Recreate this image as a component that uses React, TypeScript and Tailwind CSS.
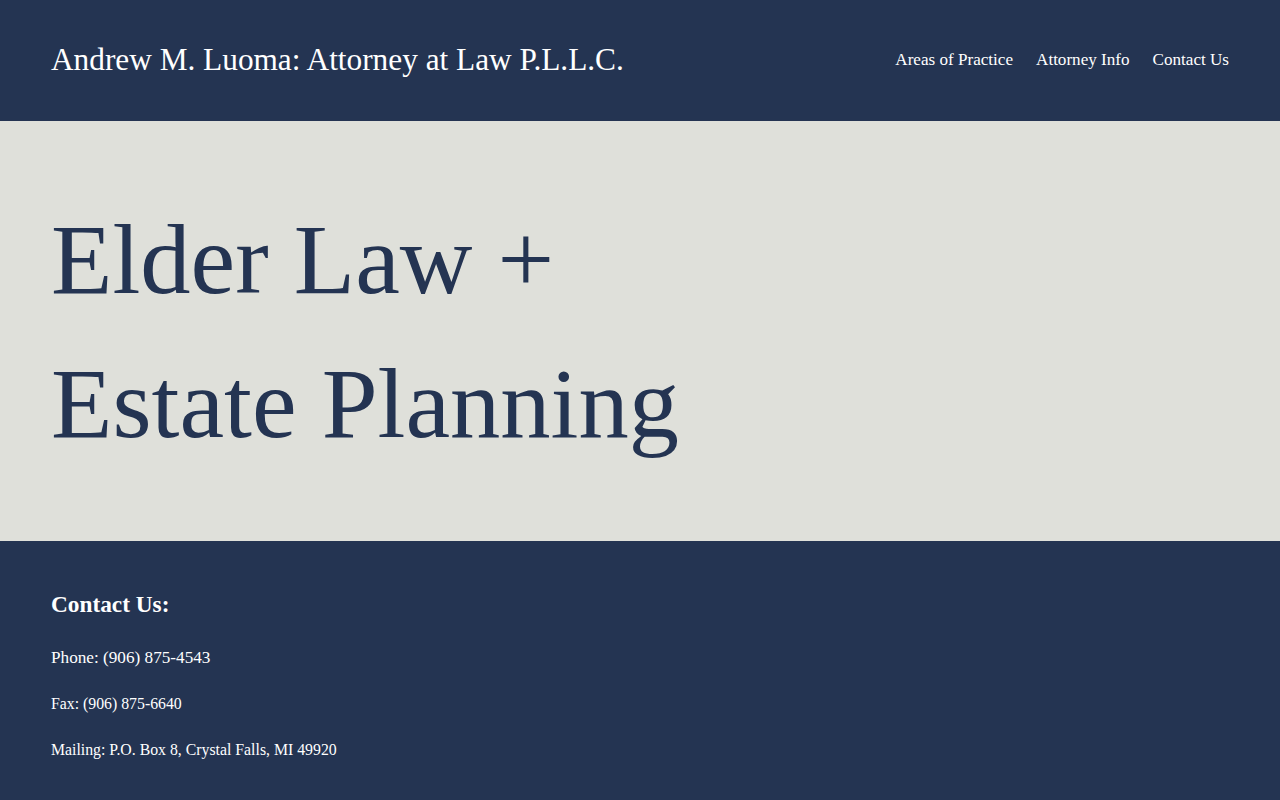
const serif = "font-['Liberation_Serif','Times_New_Roman',serif]";

const navItems = ["Areas of Practice", "Attorney Info", "Contact Us"];

function Header() {
  return (
    <header className="flex h-[121px] items-center justify-between bg-[#243452] px-[51px] text-white">
      <a href="#" className="mb-[1px] text-[31.3px] leading-[36px]">
        Andrew M. Luoma: Attorney at Law P.L.L.C.
      </a>
      <nav className="mb-[2px] flex items-center gap-[23px] text-[17.1px] leading-[24px]">
        {navItems.map((item) => (
          <a key={item} href="#" className="hover:underline">
            {item}
          </a>
        ))}
      </nav>
    </header>
  );
}

function Hero() {
  return (
    <section className="bg-[#dfe0da] px-[51px] py-[66px]">
      <h1 className="text-[100.5px] leading-[144px] text-[#243452]">
        Elder Law +
        <br />
        Estate Planning
      </h1>
    </section>
  );
}

function Footer() {
  return (
    <footer className="bg-[#243452] px-[51px] pt-[48px] pb-[40px] text-white">
      <h3 className="text-[23.3px] font-bold leading-[30px]">Contact Us:</h3>
      <div className="mt-[26px] flex flex-col gap-[20px] leading-[26px]">
        <p className="text-[17.2px]">Phone: (906) 875-4543</p>
        <p className="text-[15.8px]">Fax: (906) 875-6640</p>
        <p className="text-[15.8px]">Mailing: P.O. Box 8, Crystal Falls, MI 49920</p>
      </div>
    </footer>
  );
}

export default function App() {
  return (
    <div className={`${serif} min-h-screen bg-[#243452]`}>
      <Header />
      <Hero />
      <Footer />
    </div>
  );
}
